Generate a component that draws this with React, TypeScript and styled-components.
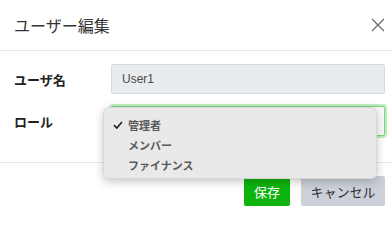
import React from "react";
import styled, { createGlobalStyle } from "styled-components";

const GlobalStyle = createGlobalStyle`
  html, body {
    margin: 0;
    padding: 0;
    background: #ffffff;
    overflow: hidden;
  }

  body {
    font-family: "Liberation Sans", "Noto Sans CJK JP", sans-serif;
  }
`;

const Modal = styled.div`
  position: relative;
  width: 392px;
  height: 220px;
  background: #ffffff;
  color: #333333;
`;

const Header = styled.div`
  display: flex;
  justify-content: space-between;
  align-items: center;
  height: 50px;
  padding: 0 7px 0 14px;
  border-bottom: 1px solid #e6e6e6;

  h5 {
    margin: 0;
    font-size: 16px;
    font-weight: 400;
    color: #333333;
  }
`;

const CloseButton = styled.button`
  display: flex;
  align-items: center;
  justify-content: center;
  width: 14px;
  height: 14px;
  padding: 0;
  border: 0;
  background: none;
  cursor: pointer;
`;

const Body = styled.div`
  display: grid;
  grid-template-columns: 97px 1fr;
  align-items: center;
  row-gap: 12px;
  padding: 13px 7px 26px 14px;
`;

const Label = styled.label`
  font-size: 13px;
  font-weight: 700;
  color: #222222;
`;

const Input = styled.input`
  box-sizing: border-box;
  height: 30px;
  padding: 0 10px;
  border: 1px solid #d6dae0;
  border-radius: 2px;
  background: #e9ecef;
  font-family: "Liberation Sans", "Noto Sans CJK JP", sans-serif;
  font-size: 12px;
  color: #4a4a4a;
  outline: none;
`;

const Select = styled.div`
  box-sizing: border-box;
  height: 30px;
  border: 1px solid #7fd37f;
  border-radius: 2px;
  background: #fafafa;
  box-shadow: 0 0 0 2px rgba(0, 185, 0, 0.25);
`;

const Footer = styled.div`
  display: flex;
  justify-content: flex-end;
  gap: 11px;
  padding: 13px 7px 14px 14px;
  border-top: 1px solid #e6e6e6;
`;

const Button = styled.button<{ $variant: "save" | "cancel" }>`
  box-sizing: border-box;
  width: ${(p) => (p.$variant === "save" ? "46px" : "84px")};
  height: 30px;
  padding: 0;
  border: 0;
  border-radius: 2px;
  font-family: "Noto Sans CJK JP", sans-serif;
  font-size: 13px;
  color: ${(p) => (p.$variant === "save" ? "#ffffff" : "#2e2e2e")};
  background: ${(p) => (p.$variant === "save" ? "#0db40d" : "#ccd1d9")};
`;

const Menu = styled.ul`
  position: absolute;
  left: 103px;
  top: 107px;
  box-sizing: border-box;
  width: 274px;
  height: 72px;
  margin: 0;
  padding: 7px 0 5px;
  list-style: none;
  background: rgba(233, 233, 233, 0.98);
  border: 1px solid rgba(0, 0, 0, 0.08);
  border-radius: 6px;
  box-shadow: 0 3px 10px rgba(0, 0, 0, 0.22);
`;

const MenuItem = styled.li`
  position: relative;
  height: 20px;
  line-height: 20px;
  padding-left: 24px;
  font-family: "Noto Sans CJK JP", sans-serif;
  font-size: 11px;
  font-weight: 700;
  color: #5a5a5a;

  svg {
    position: absolute;
    left: 9px;
    top: 6px;
  }
`;

const roles = ["管理者", "メンバー", "ファイナンス"];

const App = () => {
  return (
    <>
      <GlobalStyle />
      <Modal>
        <Header>
          <h5>ユーザー編集</h5>
          <CloseButton aria-label="close">
            <svg width="14" height="14" viewBox="0 0 14 14">
              <path
                d="M1 1 L13 13 M13 1 L1 13"
                stroke="#6b6b6b"
                strokeWidth="1.3"
                fill="none"
              />
            </svg>
          </CloseButton>
        </Header>

        <Body>
          <Label>ユーザ名</Label>
          <Input defaultValue="User1" readOnly />

          <Label>ロール</Label>
          <Select />
        </Body>

        <Footer>
          <Button $variant="save">保存</Button>
          <Button $variant="cancel">キャンセル</Button>
        </Footer>

        <Menu>
          {roles.map((role, i) => (
            <MenuItem key={role}>
              {i === 0 && (
                <svg width="10" height="8" viewBox="0 0 10 8">
                  <path
                    d="M1 4.2 L3.8 7 L9 1"
                    stroke="#222222"
                    strokeWidth="1.7"
                    fill="none"
                  />
                </svg>
              )}
              {role}
            </MenuItem>
          ))}
        </Menu>
      </Modal>
    </>
  );
};

export default App;
